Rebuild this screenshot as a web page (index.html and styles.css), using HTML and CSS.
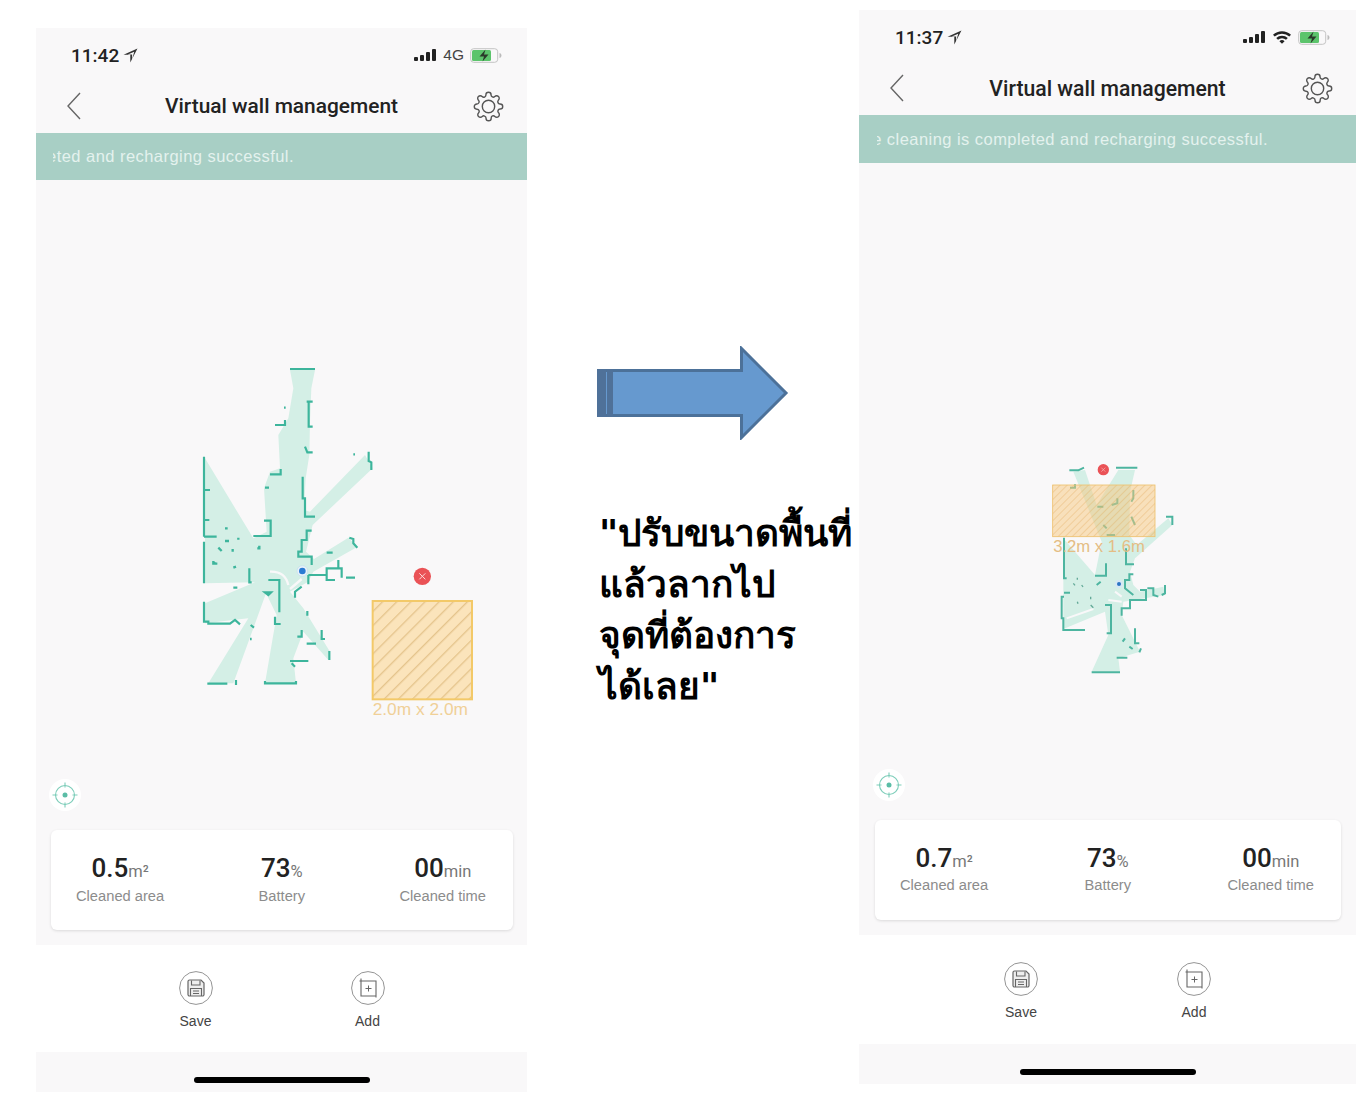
FILE: index.html
```html
<!DOCTYPE html>
<html lang="th">
<head>
    <meta charset="UTF-8">
    <meta name="viewport" content="width=device-width, initial-scale=1.0">
    <title>Virtual wall management</title>
    <link rel="stylesheet" href="styles.css">
</head>
<body>

    <!-- shared icons -->
    <svg class="icon-defs" xmlns="http://www.w3.org/2000/svg">
        <symbol id="i-gear" viewBox="0 0 24 24">
            <circle cx="12" cy="12" r="4.800" fill="none" stroke="#555" stroke-width="1.100"/>
            <path fill="none" stroke="#555" stroke-width="1.100" stroke-linejoin="round" d="M19.4 15a1.65 1.65 0 0 0 .33 1.82l.06.06a2 2 0 0 1 0 2.83 2 2 0 0 1-2.83 0l-.06-.06a1.65 1.65 0 0 0-1.82-.33 1.65 1.65 0 0 0-1 1.51V21a2 2 0 0 1-2 2 2 2 0 0 1-2-2v-.09A1.65 1.65 0 0 0 9 19.4a1.65 1.65 0 0 0-1.82.33l-.06.06a2 2 0 0 1-2.83 0 2 2 0 0 1 0-2.83l.06-.06a1.65 1.65 0 0 0 .33-1.82 1.65 1.65 0 0 0-1.51-1H3a2 2 0 0 1-2-2 2 2 0 0 1 2-2h.09A1.65 1.65 0 0 0 4.6 9a1.65 1.65 0 0 0-.33-1.82l-.06-.06a2 2 0 0 1 0-2.83 2 2 0 0 1 2.83 0l.06.06a1.65 1.65 0 0 0 1.82.33H9a1.65 1.65 0 0 0 1-1.51V3a2 2 0 0 1 2-2 2 2 0 0 1 2 2v.09a1.65 1.65 0 0 0 1 1.51 1.65 1.65 0 0 0 1.82-.33l.06-.06a2 2 0 0 1 2.83 0 2 2 0 0 1 0 2.83l-.06.06a1.65 1.65 0 0 0-.33 1.82V9a1.65 1.65 0 0 0 1.51 1H21a2 2 0 0 1 2 2 2 2 0 0 1-2 2h-.09a1.65 1.65 0 0 0-1.51 1z"/>
        </symbol>
        <symbol id="i-back" viewBox="0 0 16 28">
            <path d="M14 1 2 14l12 13" fill="none" stroke="#666" stroke-width="1.400"/>
        </symbol>
        <symbol id="i-arrow" viewBox="0 0 14 14">
            <path d="M13.500 .5 .5 6.300h6.300V13.500z M10.500 3.500 4.500 6h4v4.500z" fill="#333" fill-rule="evenodd"/>
        </symbol>
        <symbol id="i-signal" viewBox="0 0 23 14">
            <rect x="0" y="9" width="4" height="4" rx="1" fill="#222"/>
            <rect x="6" y="7" width="4" height="6" rx="1" fill="#222"/>
            <rect x="12" y="4" width="4" height="9" rx="1" fill="#222"/>
            <rect x="18" y="1" width="4" height="12" rx="1" fill="#222"/>
        </symbol>
        <symbol id="i-wifi" viewBox="0 0 20 14">
            <path d="M1 4.800a13 13 0 0 1 18 0L17.300 6.600a10.500 10.500 0 0 0-14.600 0zM4.200 8a8.500 8.500 0 0 1 11.600 0l-1.800 1.800a6 6 0 0 0-8 0zM7.400 11.200a3.800 3.800 0 0 1 5.200 0L10 13.800z" fill="#222"/>
        </symbol>
        <symbol id="i-battery" viewBox="0 0 32 15">
            <rect x=".7" y=".7" width="27" height="13.600" rx="3" fill="none" stroke="#c4c4c4"/>
            <rect x="2" y="2" width="19" height="11" rx="1.500" fill="#5cc46c"/>
            <path d="M29.500 5v5c1.200-.3 2-1.300 2-2.500s-.8-2.200-2-2.500z" fill="#bbb"/>
            <path d="M15.500 1.500 9.500 8.500H14l-1.500 5 6-7H14z" fill="#2a3a2a"/>
        </symbol>
        <symbol id="i-locate" viewBox="0 0 32 32">
            <circle cx="16" cy="16" r="16" fill="#fff"/>
            <circle cx="16" cy="16" r="9.500" fill="none" stroke="#7ccdb9" stroke-width="1.100"/>
            <circle cx="16" cy="16" r="2.500" fill="#5bbda6"/>
            <path d="M16 3.500v5M16 23.500v5M3.500 16h5M23.500 16h5" stroke="#7ccdb9" stroke-width="1.100"/>
        </symbol>
        <symbol id="i-save" viewBox="0 0 34 34">
            <circle cx="17" cy="17" r="16.400" fill="#fff" stroke="#888" stroke-width=".9"/>
            <path d="M10.500 9h11.500l3 3v11.500a1.500 1.500 0 0 1-1.500 1.500h-13a1.500 1.500 0 0 1-1.500-1.500v-13a1.500 1.500 0 0 1 1.500-1.500z" fill="#eee" stroke="#666" stroke-width="1.200"/>
            <path d="M12.500 9.500v4.500h8.500v-4.500M11.500 25v-7.500h11v7.500M14 20h6M14 22.500h6" fill="none" stroke="#666" stroke-width="1.100"/>
        </symbol>
        <symbol id="i-add" viewBox="0 0 34 34">
            <circle cx="17" cy="17" r="16.400" fill="#fff" stroke="#888" stroke-width=".9"/>
            <path d="M10 7.500v17.500h15.500M8.500 10h16.500v16.500" fill="none" stroke="#666" stroke-width="1.100"/>
            <path d="M17.500 14.500v6M14.500 17.500h6" stroke="#666" stroke-width="1"/>
        </symbol>
    </svg>

    <div class="slide">

        <div class="phone phone-left">
            <div class="status-bar">
                <span class="clock">11:42 <svg class="icon-arrow"><use href="#i-arrow"/></svg></span>
                <span class="status-icons">
                    <svg class="icon-signal"><use href="#i-signal"/></svg>
                    <span class="network">4G</span>
                    <svg class="icon-battery"><use href="#i-battery"/></svg>
                </span>
            </div>
            <div class="nav-bar">
                <svg class="icon-back"><use href="#i-back"/></svg>
                <span class="nav-title">Virtual wall management</span>
                <svg class="icon-gear"><use href="#i-gear"/></svg>
            </div>
            <div class="banner">
                <div class="ticker"><span>The cleaning is completed and recharging successful.</span></div>
            </div>
            <div class="map-area">
                <div class="map-canvas">
                    <svg class="map-svg" viewBox="0 0 900 1110" xmlns="http://www.w3.org/2000/svg">
                        <defs>
                            <pattern id="hatch-a" width="30" height="30" patternUnits="userSpaceOnUse" patternTransform="rotate(45)">
                                <rect width="30" height="30" fill="#fbe4bb"/>
                                <rect width="4" height="30" fill="#e5c48c"/>
                            </pattern>
                        </defs>
                        <path class="floor" d="M300 45H375L364 100 360 200 358 300 347 370 342 465 360 470 525 300 548 340 368 510 348 590 372 612 475 548 503 575 370 650 355 680 300 710 340 760 420 890 415 915 340 830 310 910 318 985H225L260 780 228 715 130 985H55L175 790 45 805V745L195 682 45 685V310L190 550 230 530 222 400 240 350 270 340 265 240 295 190 310 100Z"/>
                        <path class="floor-gap" d="M240 650Q285 648 295 690M300 702 335 672"/>
                        <path class="wall" d="M300 42H375M350 140H368M356 140V215H368M255 210H285V195M345 275 352 292H368M240 358H272V342M338 365V430H345V485H375M536 290V318L544 322V345M42 305V545M42 405H60M42 495H58M42 545H80M190 543H242V497H222M42 560V685M365 527H350V555H335V590H325V605H365V630M478 548 490 552V565L502 578M410 593H428M355 660H410V675H435M410 660V640H445V615M445 640H455V668M468 668H495M355 660V688M178 640V682H185M235 675H268V772M335 695 315 710V728M130 698H142M42 740V800H55V806H120L135 795 150 808M352 768V782M255 785V807H272M182 810 192 818M335 825V845H322M395 825V852H405M350 866H378M418 888V915M300 918H355M305 925 315 935M52 986H112M138 975V990M225 978V985H318V978"/>
                        <path class="wall-bits" d="M225 398h12M282 158h5M490 298h5M105 520h8M105 558h12M145 548v6M85 578l10 10M128 582v8M70 618v8h12M130 638l8-3M208 572v8h-6M225 712h18l-8 8zM180 852h5"/>
                        <circle cx="337" cy="648" r="16" fill="#e9f2fa" stroke="#c3dcef" stroke-width="2"/>
                        <circle cx="337" cy="648" r="10" fill="#2b7bd3"/>
                        <circle cx="697" cy="664" r="26" fill="#ea5256"/>
                        <path d="M688 655l18 18M706 655l-18 18" stroke="#fbdcdc" stroke-width="3"/>
                        <rect x="548" y="738" width="298" height="295" fill="url(#hatch-a)" stroke="#f3c968" stroke-width="6"/>
                        <text class="map-label" x="691" y="1079" text-anchor="middle">2.0m x 2.0m</text>
                    </svg>
                    <svg class="icon-locate"><use href="#i-locate"/></svg>
                </div>
                <div class="stats-card">
                    <div class="stat">
                        <div class="stat-value">0.5<small>m²</small></div>
                        <div class="stat-label">Cleaned area</div>
                    </div>
                    <div class="stat">
                        <div class="stat-value">73<small>%</small></div>
                        <div class="stat-label">Battery</div>
                    </div>
                    <div class="stat">
                        <div class="stat-value">00<small>min</small></div>
                        <div class="stat-label">Cleaned time</div>
                    </div>
                </div>
            </div>
            <div class="actions">
                <div class="action">
                    <svg class="icon-action"><use href="#i-save"/></svg>
                    <span>Save</span>
                </div>
                <div class="action">
                    <svg class="icon-action"><use href="#i-add"/></svg>
                    <span>Add</span>
                </div>
            </div>
            <div class="home-zone"><div class="home-bar"></div></div>
        </div>

        <div class="middle">
            <svg class="big-arrow" viewBox="0 0 192 94" xmlns="http://www.w3.org/2000/svg">
                <path d="M1 24.500H144.500V2.500L189 47 144.500 91.500V69.500H1Z" fill="#6699cf" stroke="#4c7199" stroke-width="3"/>
                <rect x="0" y="23" width="9" height="48" fill="#4f7199"/>
                <rect x="10" y="23" width="6" height="48" fill="#4f7199"/>
            </svg>
            <p class="note">"ปรับขนาดพื้นที่<br>แล้วลากไป<br>จุดที่ต้องการ<br>ได้เลย"</p>
        </div>

        <div class="phone phone-right">
            <div class="status-bar">
                <span class="clock">11:37 <svg class="icon-arrow"><use href="#i-arrow"/></svg></span>
                <span class="status-icons">
                    <svg class="icon-signal"><use href="#i-signal"/></svg>
                    <svg class="icon-wifi"><use href="#i-wifi"/></svg>
                    <svg class="icon-battery"><use href="#i-battery"/></svg>
                </span>
            </div>
            <div class="nav-bar">
                <svg class="icon-back"><use href="#i-back"/></svg>
                <span class="nav-title">Virtual wall management</span>
                <svg class="icon-gear"><use href="#i-gear"/></svg>
            </div>
            <div class="banner">
                <div class="ticker"><span>The cleaning is completed and recharging successful.</span></div>
            </div>
            <div class="map-area">
                <div class="map-canvas">
                    <svg class="map-svg" viewBox="0 0 450 675" xmlns="http://www.w3.org/2000/svg">
                        <defs>
                            <pattern id="hatch-b" width="15" height="15" patternUnits="userSpaceOnUse" patternTransform="rotate(45)">
                                <rect width="15" height="15" fill="#f7c77d" fill-opacity=".5"/>
                                <rect width="2" height="15" fill="#dda95c" fill-opacity=".55"/>
                            </pattern>
                        </defs>
                        <path class="floor" d="M100 50 135 45 170 150 235 45H285L270 110 268 240 290 270 385 190 397 210 285 310 270 350 280 390 300 410 370 395 375 420 250 440 245 480 300 590 235 610 240 650H155L205 540 195 470 70 522V250L165 360 185 260Z"/>
                        <path class="floor-gap thin" d="M80 490 160 462M205 435 245 440M225 410 245 425"/>
                        <path class="wall thin" d="M88 46H115L132 38M228 38H292M90 98H105V88M280 105V130L274 140M274 185 285 210M172 155H190M215 150 232 145V130M190 210 200 220M200 240H225M378 185H397V210M72 248V370H80M72 413H90M72 425H65V490H70V525H135M258 280V328H282M165 362H198V325M170 390 182 380M280 358H268V375H255V400L280 420M322 400H340V420L355 425M375 390V415L365 420M300 405H318V435H270V460H245V482M195 450H213V535H200M255 550 248 560M285 520V565H298M268 575 278 582M303 580 298 592M230 608H262M155 652H240"/>
                        <path class="wall-bits thin" d="M100 385l5 6M112 368v6M112 440l2 6M125 390l4 6M152 425v8M152 450l8 8"/>
                        <rect x="38" y="90" width="307" height="155" fill="url(#hatch-b)" stroke="#eec06c" stroke-width="2.500"/>
                        <circle cx="237" cy="387" r="13" fill="#d5e8f3"/>
                        <circle cx="237" cy="387" r="6" fill="#2b74c4"/>
                        <circle cx="190" cy="44" r="17" fill="#ea5256"/>
                        <path d="M184 38l12 12M196 38l-12 12" stroke="#f7b9bb" stroke-width="2"/>
                        <text class="map-label dim" x="177" y="291" text-anchor="middle">3.2m x 1.6m</text>
                    </svg>
                    <svg class="icon-locate"><use href="#i-locate"/></svg>
                </div>
                <div class="stats-card">
                    <div class="stat">
                        <div class="stat-value">0.7<small>m²</small></div>
                        <div class="stat-label">Cleaned area</div>
                    </div>
                    <div class="stat">
                        <div class="stat-value">73<small>%</small></div>
                        <div class="stat-label">Battery</div>
                    </div>
                    <div class="stat">
                        <div class="stat-value">00<small>min</small></div>
                        <div class="stat-label">Cleaned time</div>
                    </div>
                </div>
            </div>
            <div class="actions">
                <div class="action">
                    <svg class="icon-action"><use href="#i-save"/></svg>
                    <span>Save</span>
                </div>
                <div class="action">
                    <svg class="icon-action"><use href="#i-add"/></svg>
                    <span>Add</span>
                </div>
            </div>
            <div class="home-zone"><div class="home-bar"></div></div>
        </div>

    </div>

</body>
</html>
```

FILE: styles.css
```css
body {
    margin: 0;
    background: #fff;
    font-family: "Liberation Sans", Arial, sans-serif;
}

.icon-defs {
    display: none;
}

.slide {
    display: flex;
    align-items: flex-start;
    padding-left: 36px;
}

/* phones */
.phone {
    display: flex;
    flex-direction: column;
    flex-shrink: 0;
    background: #f9f8f9;
}

.phone-left {
    width: 491px;
    height: 1064px;
    margin-top: 28px;
}

.phone-right {
    width: 497px;
    height: 1074px;
    margin-top: 10px;
}

.status-bar {
    display: flex;
    justify-content: space-between;
    align-items: center;
    height: 56px;
    padding: 0 25px 2px 35px;
    box-sizing: border-box;
}

.phone-right .status-bar {
    padding: 0 26px 2px 36px;
}

.clock {
    display: flex;
    align-items: center;
    gap: 4px;
    font-family: Roboto, sans-serif;
    font-size: 19px;
    font-weight: 500;
    color: #222;
}

.icon-arrow {
    width: 15px;
    height: 15px;
}

.status-icons {
    display: flex;
    align-items: center;
    gap: 6px;
}

.network {
    font-size: 15.5px;
    color: #444;
}

.icon-signal {
    width: 23px;
    height: 14px;
}

.icon-wifi {
    width: 20px;
    height: 14px;
}

.icon-battery {
    width: 32px;
    height: 15px;
}

.nav-bar {
    display: grid;
    grid-template-columns: 1fr auto 1fr;
    align-items: center;
    height: 49px;
    padding: 0 23px 5px;
    box-sizing: border-box;
}

.icon-back {
    width: 16px;
    height: 28px;
    margin-left: 7px;
}

.icon-gear {
    justify-self: end;
    width: 31px;
    height: 31px;
}

.nav-title {
    font-family: Roboto, sans-serif;
    font-size: 20.9px;
    font-weight: 500;
    color: #222;
}

.phone-right .nav-title {
    font-size: 21.2px;
}

.banner {
    display: flex;
    align-items: center;
    height: 47px;
    padding-left: 17px;
    background: #a8cfc5;
}

.phone-right .banner {
    height: 48px;
    padding-left: 18px;
}

.ticker {
    display: flex;
    justify-content: flex-end;
    overflow: hidden;
    white-space: nowrap;
    font-size: 16.5px;
    letter-spacing: 0.45px;
    color: #e4f2ee;
}

.ticker span {
    flex-shrink: 0;
}

.phone-left .ticker {
    width: 241px;
}

.phone-right .ticker {
    width: 391px;
}

/* map */
.map-area {
    display: flex;
    flex: 1;
    flex-direction: column;
    padding: 0 14px 15px 15px;
}

.phone-right .map-area {
    padding: 0 15px 15px 16px;
}

.map-canvas {
    position: relative;
    flex: 1;
}

.map-svg {
    position: absolute;
}

.phone-left .map-svg {
    left: 139px;
    top: 175px;
    width: 300px;
    height: 370px;
}

.phone-right .map-svg {
    left: 165px;
    top: 292px;
    width: 150px;
    height: 225px;
}

.floor {
    fill: #d4efe6;
}

.floor-gap {
    fill: none;
    stroke: #f9f8f9;
    stroke-width: 7;
}

.wall {
    fill: none;
    stroke: #3db59c;
    stroke-width: 6.5;
}

.wall-bits {
    fill: #3db59c;
    stroke: #3db59c;
    stroke-width: 7;
}

.floor-gap.thin {
    stroke-width: 6;
}

.wall.thin {
    stroke: #4db5a0;
    stroke-width: 6;
}

.wall-bits.thin {
    stroke: #63a998;
    stroke-width: 4;
}

.map-label {
    font-family: "Liberation Sans", Arial, sans-serif;
    font-size: 52px;
    fill: #f0d098;
}

.map-label.dim {
    font-size: 50px;
    fill: #e4bd84;
}

.icon-locate {
    position: absolute;
    left: -2px;
    bottom: 19px;
    width: 32px;
    height: 32px;
}

.stats-card {
    display: flex;
    justify-content: space-between;
    height: 100px;
    padding: 0 27px 0 25px;
    box-sizing: border-box;
    background: #fff;
    border-radius: 6px;
    box-shadow: 0 1px 3px rgba(0, 0, 0, 0.12);
}

.stat {
    display: flex;
    flex-direction: column;
    align-items: center;
    padding-top: 23px;
}

.stat-value {
    font-family: Roboto, sans-serif;
    font-size: 26px;
    line-height: 30px;
    font-weight: 500;
    color: #222;
}

.stat-value small {
    font-size: 16.5px;
    font-weight: 400;
    color: #777;
}

.stat-label {
    margin-top: 1px;
    font-size: 14.7px;
    color: #8c8c8c;
}

.phone-right .stat-label {
    margin-top: 0;
}

/* bottom buttons */
.actions {
    display: flex;
    justify-content: center;
    gap: 138px;
    height: 107px;
    padding-top: 26px;
    box-sizing: border-box;
    background: #fff;
}

.phone-right .actions {
    gap: 139px;
    height: 109px;
    padding-top: 27px;
}

.action {
    display: flex;
    flex-direction: column;
    align-items: center;
    gap: 8px;
    width: 34px;
    font-size: 14px;
    color: #444;
}

.icon-action {
    width: 34px;
    height: 34px;
}

.home-zone {
    display: flex;
    justify-content: center;
    height: 40px;
    padding-top: 25px;
    box-sizing: border-box;
}

.home-bar {
    width: 176px;
    height: 6px;
    border-radius: 3px;
    background: #000;
}

/* middle column */
.middle {
    width: 332px;
    flex-shrink: 0;
    padding: 346px 0 0 70px;
    box-sizing: border-box;
}

.big-arrow {
    display: block;
    width: 192px;
    height: 94px;
}

.note {
    margin: 68px 0 0 2px;
    font-family: "DejaVu Sans", sans-serif;
    font-size: 37px;
    line-height: 51px;
    font-weight: 700;
    color: #000;
    white-space: nowrap;
}
```
